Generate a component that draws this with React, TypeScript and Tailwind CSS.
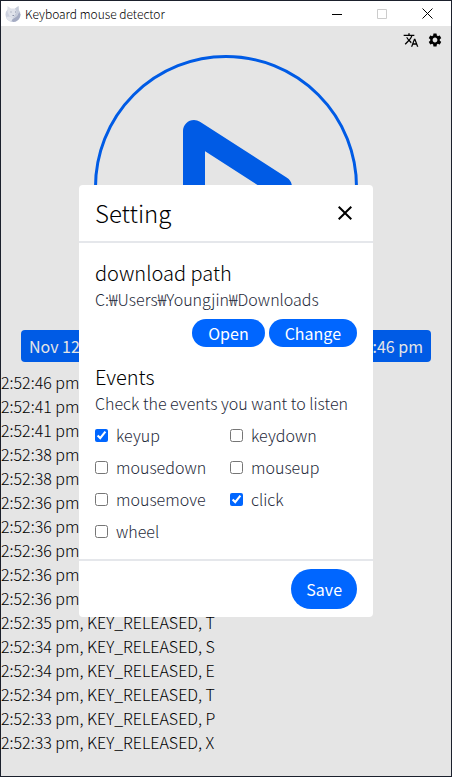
import { MdClose, MdSettings, MdTranslate } from "react-icons/md";

const logs = [
  "2:52:46 pm",
  "2:52:41 pm",
  "2:52:41 pm",
  "2:52:38 pm",
  "2:52:38 pm",
  "2:52:36 pm",
  "2:52:36 pm",
  "2:52:36 pm",
  "2:52:36 pm",
  "2:52:36 pm",
  "2:52:35 pm, KEY_RELEASED, T",
  "2:52:34 pm, KEY_RELEASED, S",
  "2:52:34 pm, KEY_RELEASED, E",
  "2:52:34 pm, KEY_RELEASED, T",
  "2:52:33 pm, KEY_RELEASED, P",
  "2:52:33 pm, KEY_RELEASED, X",
];

const events = [
  { name: "keyup", checked: true },
  { name: "keydown", checked: false },
  { name: "mousedown", checked: false },
  { name: "mouseup", checked: false },
  { name: "mousemove", checked: false },
  { name: "click", checked: true },
  { name: "wheel", checked: false },
];

function AppLogo() {
  return (
    <svg width="16" height="16" viewBox="0 0 16 16" aria-hidden="true">
      <path d="M2.500 3.500 A7.500 7.500 0 1 0 13.500 3.500 L8 5 Z" fill="#ccd1df" />
      <path d="M13 4 L15.500 8.500 A7.500 7.500 0 0 1 8 16 L6.500 14 L11 11 Z" fill="#a4abc2" />
      <path d="M2.500 0 L6 2.500 H10 L13.500 0 L14 6 L12 10 L8 12 L4.500 10 L2.500 6 Z" fill="#dfe2ea" />
      <path d="M13.500 0 L14 6 L12 10 L8 12 L11.500 6 L10 2.500 Z" fill="#c6ccda" />
      <path d="M1 11 L4.500 10.500 L8 12 L6 15.500 A7.500 7.500 0 0 1 1 11 Z" fill="#e3e6ee" />
      <path d="M5.500 5.500 h1 v1 h-1z M10 5.500 h1 v1 h-1z M7.500 9 h1.500 v1 h-1.500z" fill="#8b92a8" />
    </svg>
  );
}

function TitleBar() {
  return (
    <header className="flex h-[25px] items-center justify-between bg-white pl-1">
      <div className="flex items-center gap-1">
        <AppLogo />
        <h1 className="text-xs leading-4">Keyboard mouse detector</h1>
      </div>
      <div className="flex h-full">
        <button type="button" aria-label="Minimize" className="flex w-[45px] items-center justify-center">
          <svg width="10" height="10" viewBox="0 0 10 10" stroke="#000" shapeRendering="crispEdges">
            <path d="M0 5.500H10" />
          </svg>
        </button>
        <button type="button" aria-label="Maximize" disabled className="flex w-[45px] items-center justify-center">
          <svg width="10" height="10" viewBox="0 0 10 10" fill="none" stroke="#ccc">
            <path d="M0.500 0.500H9.500V9.500H0.500Z" />
          </svg>
        </button>
        <button type="button" aria-label="Close" className="flex w-[47px] items-center justify-center">
          <svg width="11" height="11" viewBox="0 0 11 11" stroke="#000">
            <path d="M0.500 0.500L10.500 10.500M10.500 0.500L0.500 10.500" />
          </svg>
        </button>
      </div>
    </header>
  );
}

function SettingDialog() {
  return (
    <section role="dialog" aria-label="Setting" className="w-[294px] rounded bg-white">
      <div className="flex items-center justify-between border-b-2 border-gray-200 px-4 py-3">
        <h2 className="text-2xl font-light">Setting</h2>
        <button type="button" aria-label="Close setting">
          <MdClose size={24} />
        </button>
      </div>
      <div className="px-4 pt-4 pb-3">
        <h3 className="text-xl leading-7 font-light">download path</h3>
        <p className="text-gray-800">C:₩Users₩Youngjin₩Downloads</p>
        <div className="mt-2 flex justify-end gap-1">
          <button type="button" className="h-7 rounded-full bg-[#0066ff] px-4 leading-7 font-normal text-white">
            Open
          </button>
          <button type="button" className="h-7 rounded-full bg-[#0066ff] px-4 leading-7 font-normal text-white">
            Change
          </button>
        </div>
        <h3 className="mt-4 text-xl leading-7 font-light">Events</h3>
        <p className="whitespace-nowrap text-gray-800">Check the events you want to listen</p>
        <div className="mt-1 grid grid-cols-2 gap-x-2">
          {events.map((event) => (
            <label key={event.name} className="flex items-center gap-2 py-1 text-gray-800">
              <input type="checkbox" defaultChecked={event.checked} className="h-[13px] w-[13px] accent-[#0066ff]" />
              {event.name}
            </label>
          ))}
        </div>
      </div>
      <div className="flex justify-end border-t-2 border-gray-200 px-4 py-2">
        <button type="button" className="h-10 rounded-full bg-[#0066ff] px-[15px] font-normal text-white">
          Save
        </button>
      </div>
    </section>
  );
}

export default function App() {
  return (
    <div className="flex min-h-screen flex-col border border-[#1b202c] bg-white font-['Noto_Sans_CJK_KR','Noto_Sans',sans-serif] text-base font-light text-black">
      <TitleBar />
      <div className="relative flex grow flex-col">
        <nav className="flex justify-end gap-2 px-2 pt-1.5">
          <button type="button" aria-label="Language">
            <MdTranslate size={16} />
          </button>
          <button type="button" aria-label="Settings">
            <MdSettings size={16} />
          </button>
        </nav>
        <main className="pt-[7px]">
          <button type="button" aria-label="Start" className="mx-auto block">
            <svg width="264" height="264" viewBox="0 0 264 264" fill="none" stroke="#0066ff">
              <circle cx="132" cy="132" r="130.500" strokeWidth="3" />
              <path d="M100 76L187 132L100 188Z" strokeWidth="22" strokeLinejoin="round" />
            </svg>
          </button>
          <div className="mx-5 mt-[11px] flex h-8 items-center justify-between rounded bg-[#0066ff] px-2 font-normal text-white">
            <time>Nov 12</time>
            <time>2:52:46 pm</time>
          </div>
          <ul className="mt-2">
            {logs.map((line, index) => (
              <li key={index}>{line}</li>
            ))}
          </ul>
        </main>
        <div className="absolute inset-0 flex items-center justify-center bg-black/10">
          <SettingDialog />
        </div>
      </div>
    </div>
  );
}
